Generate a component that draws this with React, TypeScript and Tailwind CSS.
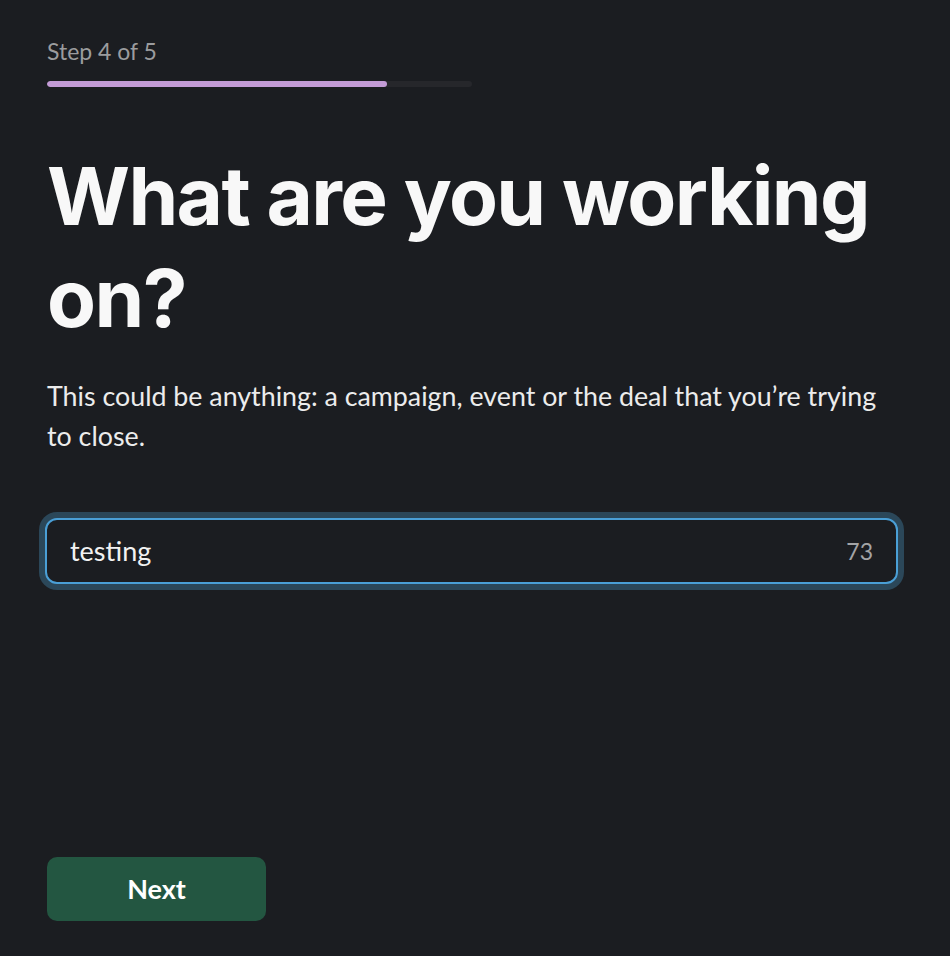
import { useState } from 'react';

const MAX_LEN = 80;

export default function App() {
  const [value, setValue] = useState('testing');
  const remaining = MAX_LEN - value.length;

  return (
    <div
      className="min-h-[956px] w-full bg-[#1b1d21] text-white flex flex-col"
      style={{ fontFamily: 'Lato, "Noto Sans", sans-serif' }}
    >
      <main className="flex-1 flex flex-col pl-[47px] pr-[52px] pt-[36px] pb-[35px]">
        {/* Step + progress */}
        <p className="text-[23px] leading-[30px] text-[#9b9c9e]">Step 4 of 5</p>
        <div className="mt-[15px] h-[6px] w-[425px] rounded-full bg-[#26272b] overflow-hidden">
          <div className="h-full w-[80%] rounded-full bg-[#c39bd6]" />
        </div>

        {/* Heading */}
        <h1
          className="mt-[58px] text-[80px] leading-[102px] font-bold tracking-[-0.02em] text-[#f8f8f8]"
          style={{ fontFamily: 'Inter, "Noto Sans", sans-serif' }}
        >
          What are you working on?
        </h1>

        <p className="mt-[27px] text-[26.8px] leading-[40px] text-[#ececec] max-w-[845px]">
          This could be anything: a campaign, event or the deal that you’re trying to close.
        </p>

        {/* Input with focus ring */}
        <div className="mt-[62px] -ml-[2px] w-[853px] rounded-[12px] border-[2px] border-[#4a9fd6] shadow-[0_0_0_6px_#2b4759] flex items-center h-[66px] px-[23px] bg-[#1b1d21]">
          <input
            value={value}
            maxLength={MAX_LEN}
            onChange={(e) => setValue(e.target.value)}
            className="flex-1 bg-transparent outline-none text-[27px] text-[#f2f2f2]"
            style={{ fontFamily: 'Lato, "Noto Sans", sans-serif' }}
          />
          <span className="text-[23px] text-[#a3a4a6]">{remaining}</span>
        </div>

        <div className="flex-1" />

        <button
          type="button"
          className="w-[219px] h-[64px] rounded-[10px] bg-[#235641] text-white text-[27px] font-bold"
        >
          Next
        </button>
      </main>
    </div>
  );
}
